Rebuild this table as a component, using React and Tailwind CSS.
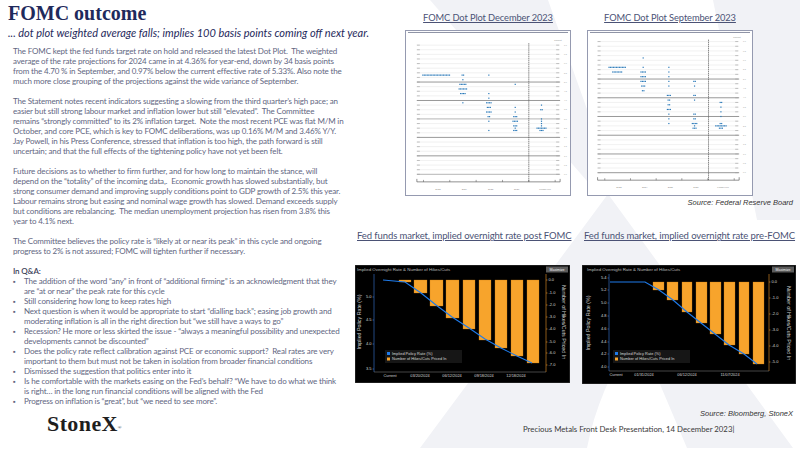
import React from "react";

const para1 = [
  "The FOMC kept the fed funds target rate on hold and released the latest Dot Plot.  The weighted",
  "average of the rate projections for 2024 came in at 4.36% for year-end, down by 34 basis points",
  "from the 4.70 % in September, and 0.97% below the current effective rate of 5.33%. Also note the",
  "much more close grouping of the projections against the wide variance of September.",
];
const para2 = [
  "The Statement notes recent indicators suggesting a slowing from the third quarter\u2019s high pace; an",
  "easier but still strong labour market and inflation lower but still \u201celevated\u201d.  The Committee",
  "remains \u201cstrongly committed\u201d to its 2% inflation target.  Note the most recent PCE was flat M/M in",
  "October, and core PCE, which is key to FOMC deliberations, was up 0.16% M/M and 3.46% Y/Y.",
  "Jay Powell, in his Press Conference, stressed that inflation is too high, the path forward is still",
  "uncertain; and that the full effects of the tightening policy have not yet been felt.",
];
const para3 = [
  "Future decisions as to whether to firm further, and for how long to maintain the stance, will",
  "depend on the \u201ctotality\u201d of the incoming data,.  Economic growth has slowed substantially, but",
  "strong consumer demand and improving supply conditions point to GDP growth of 2.5% this year.",
  "Labour remains strong but easing and nominal wage growth has slowed. Demand exceeds supply",
  "but conditions are rebalancing.  The median unemployment projection has risen from 3.8% this",
  "year to 4.1% next.",
];
const para4 = [
  "The Committee believes the policy rate is \u201clikely at or near its peak\u201d in this cycle and ongoing",
  "progress to 2% is not assured; FOMC will tighten further if necessary.",
];
const bullets = [
  ["The addition of the word \u201cany\u201d in front of \u201cadditional firming\u201d is an acknowledgment that they", "are \u201cat or near\u201d the peak rate for this cycle"],
  ["Still considering how long to keep rates high"],
  ["Next question is when it would be appropriate to start \u201cdialling back\u201d; easing job growth and", "moderating inflation is all in the right direction but \u201cwe still have a ways to go\u201d"],
  ["Recession? He more or less skirted the issue - \u201calways a meaningful possibility and unexpected", "developments cannot be discounted\u201d"],
  ["Does the policy rate reflect calibration against PCE or economic support?  Real rates are very", "important to them but must not be taken in isolation from broader financial conditions"],
  ["Dismissed the suggestion that politics enter into it"],
  ["Is he comfortable with the markets easing on the Fed\u2019s behalf? \u201cWe have to do what we think", "is right\u2026 in the long run financial conditions will be aligned with the Fed"],
  ["Progress on inflation is \u201cgreat\u201d, but \u201cwe need to see more\u201d."],
];

const decPlot = {
  x0: 11, x1: 156, y0: 14.3, step: 4.67, thick: [8, 12, 20, 24], band: [16, 28],
  vx: 124.3, yb: 152.7, ticks: [17.7, 44.3, 71, 97.7, 124.3, 151],
  labelY: 161, labels: [[32.3, "2023"], [59, "2024"], [85.7, "2025"], [112, "2026"], [140.7, "Longer run"]],
  cols: [30.7, 57.7, 84, 110.7, 137.3],
  dots: [
    [[6.5, 19]],
    [[6.5, 2], [7.5, 1], [8.5, 5], [9.5, 6], [10.5, 4], [12.5, 1]],
    [[6.5, 1], [10.5, 1], [11.5, 1], [12.5, 4], [13.5, 3], [14.5, 4], [15.5, 2], [16.5, 1], [18.5, 1]],
    [[8.5, 1], [13.5, 1], [14.5, 1], [15.5, 3], [16.5, 4], [17.5, 3], [18, 1], [18.5, 3]],
    [[13, 1], [14, 2], [16, 1], [16.5, 1], [17, 1], [17.5, 1], [18, 7], [18.5, 3]],
  ],
};

const sepPlot = {
  x0: 9.7, x1: 153, y0: 10.7, step: 4.74, thick: [8, 12, 16, 20, 24, 28], band: [],
  vx: 122, yb: 151, ticks: [17, 43, 69, 95, 121.3, 148],
  labelY: 159.3, labels: [[31.3, "2023"], [57.3, "2024"], [83.3, "2025"], [109.3, "2026"], [136.7, "Longer run"]],
  cols: [29.7, 56, 82, 108, 134.7],
  dots: [
    [[5.5, 12], [6.5, 7]],
    [[3.5, 1], [5.5, 1], [6.5, 4], [7.5, 4], [8.5, 4], [9.5, 3], [10.5, 2]],
    [[5.5, 1], [6.5, 1], [7.5, 1], [8.5, 1], [9.5, 1], [11.5, 3], [12.5, 2], [13.5, 2], [14.5, 3], [15.5, 1], [16.5, 1], [17.5, 1]],
    [[8.5, 2], [9.5, 1], [11.5, 2], [12.5, 1], [15.5, 2], [16.5, 2], [17.5, 4], [18, 1], [18.5, 3]],
    [[13, 2], [14, 1], [15, 1], [16, 1], [17.5, 2], [18, 8], [18.5, 3]],
  ],
};

const postChart = {
  w: 215, h: 118, axL: 19, axR: 191, axB: 107, barTop: 15, titleX: 2,
  leftTicks: [["5.0", 32], ["4.5", 55], ["4.0", 79], ["3.5", 104]],
  rightTicks: [["0.0", 15], ["-1.0", 28], ["-2.0", 40], ["-3.0", 52], ["-4.0", 64], ["-5.0", 77], ["-6.0", 88], ["-7.0", 100]],
  bars: [[44, 56, 17], [59, 72, 28], [75, 88, 41], [91, 104, 53], [108, 120, 64], [124, 136, 75], [140, 152, 83], [156, 168, 91], [172, 184, 98]],
  line: [[28, 15], [50, 17], [66, 28], [81, 40], [97, 52], [114, 63], [130, 74], [146, 83], [162, 91], [177, 98]],
  xLabels: [["Current", 35], ["03/20/2024", 65], ["06/12/2024", 97], ["09/18/2024", 129], ["12/18/2024", 161]],
  xLabelY: 112, legend: [30, 85], leftTitle: [5, 57], rightTitle: [208, 57],
};

const preChart = {
  w: 214, h: 119, axL: 27, axR: 187, axB: 106, barTop: 17, titleX: 5,
  leftTicks: [["5.4", 13], ["5.2", 25], ["5.0", 38], ["4.8", 51], ["4.6", 64], ["4.4", 77], ["4.2", 89], ["4.0", 102]],
  rightTicks: [["0.0", 17], ["-1.0", 33], ["-2.0", 49], ["-3.0", 65], ["-4.0", 81], ["-5.0", 97]],
  bars: [[71, 82, 25], [85, 96, 35], [100, 110, 47], [114, 125, 58], [128, 139, 69], [142, 153, 80], [157, 167, 89], [171, 182, 99]],
  line: [[28, 17], [63, 17], [77, 25], [91, 35], [105, 47], [119, 58], [133, 69], [147, 80], [162, 89], [175, 99]],
  xLabels: [["Current", 34], ["01/31/2024", 62], ["06/12/2024", 105], ["11/07/2024", 148]],
  xLabelY: 111, legend: [31, 85], leftTitle: [7, 58], rightTitle: [206, 58],
};

function DotPlot({ p }) {
  const rows = Array.from({ length: 29 }, (_, k) => k);
  return (
    <svg width="164" height="164" viewBox="0 0 166 166" fontFamily="Liberation Sans, sans-serif">
      <line x1="2" y1="1.5" x2="164" y2="1.5" stroke="#8a8fa3" strokeWidth="1" />
      {rows.map((k) => {
        const y = p.y0 + p.step * k;
        const isThick = p.thick.includes(k);
        const isBand = p.band.includes(k);
        return (
          <g key={k}>
            <line
              x1={p.x0} x2={p.x1} y1={y} y2={y}
              stroke={isBand ? "#c4c4c4" : isThick ? "#7d7d7d" : "#d6d6d6"}
              strokeWidth={isBand ? 1.3 : isThick ? 0.8 : 0.35}
            />
            <line x1={p.x0} x2={p.x0 + 3} y1={y} y2={y} stroke="#9a9a9a" strokeWidth="0.6" />
            <line x1={p.x1 - 4} x2={p.x1 - 1} y1={y} y2={y} stroke="#9a9a9a" strokeWidth="0.6" />
            {k % 2 === 0 && (
              <text x={p.x1 + 4} y={y + 0.7} fontSize="2" fill="#999">
                {(7 - k * 0.25).toFixed(1)}
              </text>
            )}
          </g>
        );
      })}
      <text x={p.x1 - 6} y={p.y0 - 4} fontSize="2.2" fill="#888">Percent</text>
      <line x1={p.vx} x2={p.vx} y1={p.y0 - 2} y2={p.yb} stroke="#555" strokeWidth="0.7" strokeDasharray="1.5 0.6" />
      <line x1={p.x0} x2={p.x1} y1={p.yb} y2={p.yb} stroke="#444" strokeWidth="0.6" />
      {p.ticks.map((t) => (
        <line key={t} x1={t} x2={t} y1={p.yb - 2} y2={p.yb} stroke="#444" strokeWidth="0.5" />
      ))}
      <line x1={p.x0} x2={p.x0} y1={p.yb - 3} y2={p.yb} stroke="#444" strokeWidth="0.6" />
      <line x1={p.x1} x2={p.x1} y1={p.yb - 3} y2={p.yb} stroke="#444" strokeWidth="0.6" />
      {p.labels.map(([x, l]) => (
        <text key={l} x={x} y={p.labelY} fontSize="2.4" fill="#888" textAnchor="middle">{l}</text>
      ))}
      {p.dots.map((col, ci) =>
        col.map(([h, n]) =>
          Array.from({ length: n }, (_, i) => (
            <rect
              key={`${ci}-${h}-${i}`}
              x={p.cols[ci] - (n * 1.5) / 2 + i * 1.5}
              y={p.y0 + p.step * h - 0.6}
              width="1.2" height="1.2"
              fill="#2878b8"
            />
          ))
        )
      )}
    </svg>
  );
}

function RateChart({ c }) {
  const pts = c.line.map(([x, y]) => `${x},${y}`).join(" ");
  return (
    <svg width={c.w} height={c.h} viewBox={`0 0 ${c.w} ${c.h}`} fontFamily="Liberation Sans, sans-serif">
      <rect width={c.w} height={c.h} fill="#000" stroke="#3a3a3a" strokeWidth="1" />
      <text x={c.titleX} y="6" fontSize="4.4" fill="#bdbdbd">Implied Overnight Rate &amp; Number of Hikes/Cuts</text>
      <rect x={c.w - 24} y="1.5" width="22" height="6" fill="#5b5b5b" />
      <text x={c.w - 13} y="5.8" fontSize="3.6" fill="#eeeeee" textAnchor="middle">Maximize</text>
      {c.bars.map(([x1, x2, b]) => (
        <rect key={x1} x={x1} y={c.barTop} width={x2 - x1} height={b - c.barTop} fill="#f7a42c" stroke="#c87a10" strokeWidth="0.3" />
      ))}
      <polyline points={pts} fill="none" stroke="#1f7bea" strokeWidth="1.1" />
      <line x1={c.axL} x2={c.axL} y1="9" y2={c.axB} stroke="#3b78d8" strokeWidth="0.6" />
      <line x1={c.axR} x2={c.axR} y1="9" y2={c.axB} stroke="#e8962a" strokeWidth="0.6" />
      <line x1={c.axL} x2={c.axR} y1={c.axB} y2={c.axB} stroke="#8a8a8a" strokeWidth="0.5" />
      {c.leftTicks.map(([l, y]) => (
        <g key={l}>
          <line x1={c.axL - 1.5} x2={c.axL} y1={y} y2={y} stroke="#3b78d8" strokeWidth="0.6" />
          <text x={c.axL - 2.5} y={y + 1.4} fontSize="4" fill="#d8d8d8" textAnchor="end">{l}</text>
        </g>
      ))}
      {c.rightTicks.map(([l, y]) => (
        <g key={l}>
          <line x1={c.axR} x2={c.axR + 1.5} y1={y} y2={y} stroke="#e8962a" strokeWidth="0.6" />
          <text x={c.axR + 2.5} y={y + 1.4} fontSize="4" fill="#d8d8d8">{l}</text>
        </g>
      ))}
      {c.xLabels.map(([l, x]) => (
        <text key={l} x={x} y={c.xLabelY} fontSize="3.9" fill="#d8d8d8" textAnchor="middle">{l}</text>
      ))}
      <text
        x={c.leftTitle[0]} y={c.leftTitle[1]} fontSize="5.3" fill="#d0d0d0" textAnchor="middle"
        transform={`rotate(-90 ${c.leftTitle[0]} ${c.leftTitle[1]})`} dominantBaseline="middle"
      >
        Implied Policy Rate (%)
      </text>
      <text
        x={c.rightTitle[0]} y={c.rightTitle[1]} fontSize="5.3" fill="#d0d0d0" textAnchor="middle"
        transform={`rotate(90 ${c.rightTitle[0]} ${c.rightTitle[1]})`} dominantBaseline="middle"
      >
        Number of Hikes/Cuts Priced In
      </text>
      <rect x={c.legend[0]} y={c.legend[1]} width="77" height="13" fill="#161616" />
      <rect x={c.legend[0] + 2} y={c.legend[1] + 2} width="3" height="3" fill="#1f7bea" />
      <text x={c.legend[0] + 7} y={c.legend[1] + 4.7} fontSize="3.9" fill="#d8d8d8">Implied Policy Rate (%)</text>
      <rect x={c.legend[0] + 2} y={c.legend[1] + 7.5} width="3" height="3" fill="#f7a42c" />
      <text x={c.legend[0] + 7} y={c.legend[1] + 10.2} fontSize="3.9" fill="#d8d8d8">Number of Hikes/Cuts Priced In</text>
    </svg>
  );
}

function Watermark() {
  return (
    <svg className="absolute inset-0" width="800" height="450" viewBox="0 0 800 450">
      <g fill="#f1f2f6">
        <path d="M430 0 L548 0 L618 196 L600 196 Z" />
        <path d="M608 194 L420 448 L587 448 Q598 390 637 330 L687 448 L793 448 Z" />
        <path d="M713 0 L800 0 L800 220 L757 220 Z" />
      </g>
    </svg>
  );
}

function Lines({ lines }) {
  return lines.map((l, i) => (
    <div key={i} className="whitespace-pre">{l}</div>
  ));
}

export default function App() {
  return (
    <div className="relative h-[450px] w-[800px] overflow-hidden bg-white font-['Lato',sans-serif]">
      <Watermark />
      <div className="relative flex h-full">
        {/* Left text column */}
        <div className="w-[350px] shrink-0 pl-[8px] pt-[1px]">
          <h1 className="font-['Liberation_Serif',serif] text-[20px] font-bold leading-[24px] text-[#1f2a5c]">FOMC outcome</h1>
          <p className="mt-[1px] whitespace-nowrap text-[11px] italic leading-[14px] text-[#1f2a5c]">
            ... dot plot weighted average falls; implies 100 basis points coming off next year.
          </p>
          <div className="mt-[6px] pl-[5px] text-[8px] leading-[10px] tracking-[-0.15px] text-[#62667f]">
            <Lines lines={para1} />
            <div className="h-[10px]" />
            <Lines lines={para2} />
            <div className="h-[10px]" />
            <Lines lines={para3} />
            <div className="h-[10px]" />
            <Lines lines={para4} />
            <div className="h-[10px]" />
            <div className="font-semibold text-[#3d4159]">In Q&amp;A:</div>
            {bullets.map((b, i) => (
              <div key={i} className="flex">
                <span className="w-[11px] shrink-0 text-[7px]">{"\u25aa"}</span>
                <div>
                  <Lines lines={b} />
                </div>
              </div>
            ))}
          </div>
          <div className="ml-[39px] mt-[7px] font-['Liberation_Serif',serif] text-[22px] font-semibold leading-[22px] tracking-[0.4px] text-[#1e1e1e]">
            StoneX<sup className="text-[5px] font-normal">{"\u00ae"}</sup>
          </div>
        </div>

        {/* Right charts column */}
        <div className="flex-1 pt-[11px]">
          <div className="flex gap-[16px] pl-[55px]">
            <div className="flex w-[166px] flex-col items-center">
              <div className="whitespace-nowrap text-[9.3px] leading-[14px] tracking-[-0.1px] text-[#4b5275] underline">FOMC Dot Plot December 2023</div>
              <div className="mt-[5px] border border-[#959ab0] bg-white">
                <DotPlot p={decPlot} />
              </div>
            </div>
            <div className="flex w-[166px] flex-col items-center">
              <div className="whitespace-nowrap text-[9.3px] leading-[14px] tracking-[-0.1px] text-[#4b5275] underline">FOMC Dot Plot September 2023</div>
              <div className="mt-[5px] border border-[#959ab0] bg-white">
                <DotPlot p={sepPlot} />
              </div>
            </div>
          </div>
          <div className="mt-[2px] pr-[7px] text-right font-['Liberation_Sans',sans-serif] text-[7.5px] italic leading-[10px] text-[#333]">
            Source:  Federal  Reserve  Board
          </div>

          <div className="mt-[21px] flex gap-[12px] pl-[5px]">
            <div className="flex w-[215px] flex-col">
              <div className="whitespace-nowrap pl-[2px] text-[9.5px] leading-[14px] tracking-[-0.1px] text-[#4b5275] underline">
                Fed funds market, implied overnight rate post FOMC
              </div>
              <div className="mt-[22px]">
                <RateChart c={postChart} />
              </div>
            </div>
            <div className="flex w-[214px] flex-col">
              <div className="whitespace-nowrap pl-[2px] text-[9.5px] leading-[14px] tracking-[-0.1px] text-[#4b5275] underline">
                Fed funds market, implied overnight rate pre-FOMC
              </div>
              <div className="mt-[22px]">
                <RateChart c={preChart} />
              </div>
            </div>
          </div>
          <div className="mt-[25px] pr-[7px] text-right font-['Liberation_Sans',sans-serif] text-[7.5px] italic leading-[10px] text-[#333]">
            Source:  Bloomberg,  StoneX
          </div>
          <div className="mt-[5px] pl-[173px] text-[7.8px] leading-[10px] text-[#3a3a3a]">
            Precious Metals Front Desk Presentation, 14 December 2023|
          </div>
        </div>
      </div>
    </div>
  );
}
